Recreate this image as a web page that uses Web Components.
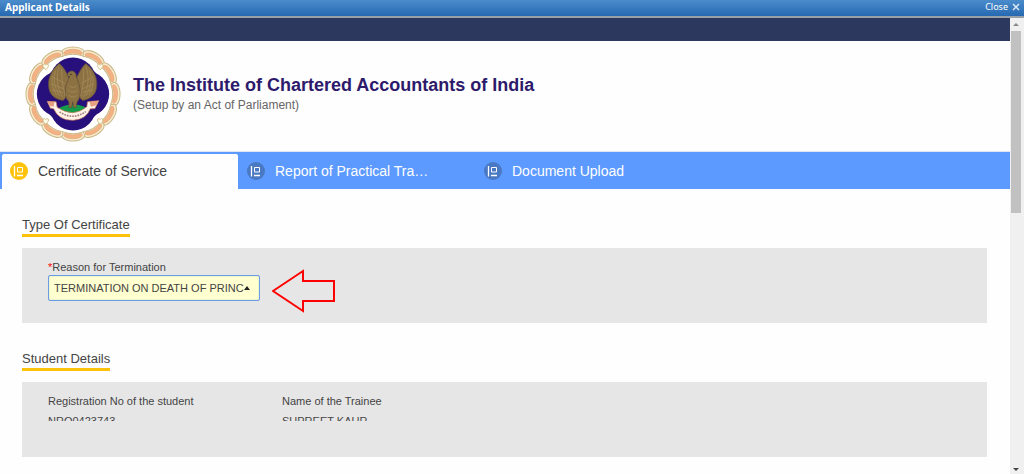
<!DOCTYPE html>
<html lang="en">
<head>
<meta charset="utf-8">
<meta name="viewport" content="width=device-width, initial-scale=1">
<title>Applicant Details</title>
<style>
  body{
    margin: 0;
    color: #444;
    background: #fefefe;
    font-family: "Liberation Sans", Arial, sans-serif;
    font-size: 11px;
  }
</style>
</head>
<body>
<app-dialog heading="Applicant Details">
  <site-header></site-header>
  <tab-bar>
    <tab-item selected>Certificate of Service</tab-item>
    <tab-item>Report of Practical Tra…</tab-item>
    <tab-item>Document Upload</tab-item>
  </tab-bar>
  <form-section heading="Type Of Certificate">
    <reason-field></reason-field>
    <pointer-arrow></pointer-arrow>
  </form-section>
  <form-section heading="Student Details">
    <read-field label="Registration No of the student">NRO0423743</read-field>
    <read-field label="Name of the Trainee">SUPREET KAUR</read-field>
  </form-section>
</app-dialog>

<script>
const define = (name, html) => customElements.define(name, class extends HTMLElement {
  constructor () {
    super()
    this.attachShadow({ mode: 'open' })
    this.shadowRoot.innerHTML = typeof html === 'function' ? html(this) : html
  }
})

/**
 * Dialog window: title bar, content and scroll rail
 */
define('app-dialog', el => `
<style>
  :host{
    display: flex;
    flex-direction: column;
    height: 100vh;
    overflow: hidden;
  }

  header{
    display: flex;
    justify-content: space-between;
    align-items: center;
    height: 16px;
    flex: none;
    padding: 0 4px 0 5px;
    border-bottom: 2px solid #98a0a8;
    background: linear-gradient(#4a8ccb, #2769b1);
    color: white;
    font-family: "Noto Sans", sans-serif;
  }

  h1{
    margin: 0;
    padding-bottom: 2px;
    font-size: 10px;
    line-height: 14px;
  }

  button{
    display: flex;
    align-items: center;
    gap: 4px;
    padding: 0 0 2px;
    border: none;
    background: none;
    color: inherit;
    font: 9px/14px "Noto Sans", sans-serif;
  }

  .body{
    display: flex;
    flex: 1;
    min-height: 0;
  }

  main{
    flex: 1;
    min-width: 0;
    overflow: hidden;
  }
</style>

<header>
  <h1>${el.getAttribute('heading')}</h1>
  <button>Close <svg width="8" height="8" viewBox="0 0 8 8" stroke="#dce9f6" stroke-width="1.5"><path d="M1 1l6 6M7 1l-6 6"/></svg></button>
</header>
<div class="body">
  <main><slot></slot></main>
  <scroll-rail></scroll-rail>
</div>
`)

define('scroll-rail', `
<style>
  :host{
    display: flex;
    flex-direction: column;
    align-items: center;
    flex: none;
    box-sizing: border-box;
    width: 14px;
    padding-right: 2px;
    background: #f0f0f0;
  }

  svg{
    display: block;
    flex: none;
  }

  i{
    width: 10px;
    height: 40%;
    margin-bottom: auto;
    background: #c1c1c1;
  }
</style>

<svg width="10" height="13" viewBox="0 0 10 13"><path d="M2 8l3-3 3 3z" fill="#888"/></svg>
<i></i>
<svg width="10" height="8" viewBox="0 0 10 8"><path d="M2 2h6l-3 3z" fill="#444"/></svg>
`)

/**
 * Institute emblem: petal ring, blue ground, eagle and ribbon
 */
const petals = Array.from({ length: 12 }, (_, i) => `<use href="#petal" transform="rotate(${i * 30})"/>`).join('')
const hearts = [45, 135, 225, 315].map(a => `<use href="#heart" transform="rotate(${a}) translate(0 -114) rotate(${-a})"/>`).join('')

define('institute-logo', `
<style>
  :host{
    display: block;
    flex: none;
  }

  svg{
    display: block;
  }
</style>

<svg width="96" height="96" viewBox="-142 -142 284 284" role="img" aria-label="Institute emblem">
  <defs>
    <g id="petal">
      <path d="M-35-122C-31-145 31-145 35-122L30-112Q0-123-30-112z" fill="#f8edd0" stroke="#c9b888" stroke-width="3"/>
      <path d="M-28-121C-23-136 23-136 28-121L24-116Q0-126-24-116z" fill="#f3b184" stroke="#e3a878" stroke-width="2"/>
    </g>
    <path id="heart" d="M0 9C-8 1-10-3-7-7Q-3-10 0-5Q3-10 7-7C10-3 8 1 0 9z" fill="#fffbea" stroke="#c9b77f" stroke-width="2.5"/>
  </defs>
  <circle r="116" fill="#fff"/>
  ${petals}
  ${hearts}
  <g fill="#28107c">
    <circle r="92"/>
    <circle cy="-40" r="68"/>
    <circle cy="40" r="68"/>
    <circle cx="-39" r="68"/>
    <circle cx="39" r="68"/>
  </g>
  <ellipse cy="51" rx="45" ry="20" fill="#159a49"/>
  <g fill="#8c7143" stroke="#625039" stroke-width="2">
    <path d="M-7-34C-16-59-26-79-41-90C-64-71-77-44-71-15C-67 5-50 17-29 19C-15 5-7-9-7-34z"/>
    <path d="M5-34C15-59 25-79 38-90C63-71 75-44 69-15C65 5 47 17 28 19C14 5 5-9 5-34z"/>
    <path d="M-18-55Q-13-69-2-68Q10-65 10-51L19-25Q26 8 12 24L9 40H2L-1 23L-4 40H-12L-12 23Q-28 9-21-25L-10-52z"/>
  </g>
  <g fill="none" stroke="#a98f5c" stroke-width="2">
    <path d="M-42-80C-49-55-50-20-30 10M-52-69Q-65-36-40 6M-61-53Q-66-25-49 3M-34-74Q-34-29-23 6M-65-30l38 15M-62-12l32 7M-57-49l32 18"/>
    <path d="M39-80C47-55 49-20 29 10M49-69Q62-36 38 6M58-53Q64-25 47 3M32-74Q33-29 23 6M62-30L26-15M59-12L28-5M55-49L24-31"/>
    <path d="M-13-25Q0-14 11-25M-14-11Q0 0 13-11M-12 4Q0 14 11 4"/>
  </g>
  <circle cx="-6" cy="-58" r="2" fill="#222"/>
  <path d="M-76 22L-50 23L-47 39Q0 72 41 38L43 23L76 20L65 43L51 44Q40 75 0 78Q-43 78-57 44L-67 42z" fill="#fff3e8" stroke="#cf7b5b" stroke-width="2"/>
  <path d="M-76 22L-55 23L-57 37L-67 36zM76 20L49 24L53 38L66 35z" fill="#e7a082"/>
  <path d="M-40 53Q0 79 38 52" fill="none" stroke="#a98080" stroke-width="5" stroke-dasharray="5 3"/>
</svg>
`)

define('site-header', `
<style>
  :host{
    display: block;
  }

  .strip{
    height: 23px;
    background: #2c385d;
  }

  .brand{
    display: flex;
    align-items: center;
    gap: 12px;
    box-sizing: border-box;
    height: 111px;
    padding: 0 25px 4px;
    border-bottom: 1px solid #dce6f5;
  }

  h2{
    margin: 0;
    color: #2d1a6b;
    font-size: 18px;
    line-height: 22px;
  }

  p{
    margin: 0;
    color: #666;
    font-size: 12px;
    line-height: 18px;
  }
</style>

<div class="strip"></div>
<div class="brand">
  <institute-logo></institute-logo>
  <div>
    <h2>The Institute of Chartered Accountants of India</h2>
    <p>(Setup by an Act of Parliament)</p>
  </div>
</div>
`)

define('tab-bar', `
<style>
  :host{
    display: flex;
    gap: 1px;
    padding: 2px 2px 0;
    background: #5c9aff;
  }
</style>

<slot></slot>
`)

define('tab-item', `
<style>
  :host{
    flex: 0 1 236px;
    min-width: 0;
    color: white;
    --badge: #4a78c2;
  }

  :host([selected]){
    border-radius: 2px 2px 0 0;
    background: #fefefe;
    color: #444;
    --badge: #ffc20a;
  }

  button{
    display: flex;
    align-items: center;
    gap: 10px;
    width: 100%;
    height: 35px;
    padding: 0 8px 2px;
    border: none;
    background: none;
    color: inherit;
    font: inherit;
    font-size: 14px;
    white-space: nowrap;
  }

  svg{
    flex: none;
  }
</style>

<button>
  <svg width="18" height="18" viewBox="0 0 18 18">
    <circle cx="9" cy="9" r="9" fill="var(--badge)"/>
    <path d="M4.500 4V14.500M7 13.500h6" stroke="#fff" stroke-width="1.300"/>
    <path d="M7.500 5.500h5V10h-5z" fill="none" stroke="#fff"/>
  </svg>
  <span><slot></slot></span>
</button>
`)

/**
 * Underlined heading with a grey panel below it
 */
define('form-section', el => `
<style>
  :host{
    display: block;
    padding: 26px 23px 0 22px;
  }

  h3{
    display: inline-block;
    margin: 0 0 11px;
    border-bottom: 3px solid #ffc20a;
    font-size: 13px;
    font-weight: normal;
    line-height: 19px;
    vertical-align: top;
  }

  .panel{
    display: flex;
    align-items: flex-start;
    gap: 12px;
    box-sizing: border-box;
    height: 75px;
    padding: 12px 26px;
    background: #e6e6e6;
  }
</style>

<h3>${el.getAttribute('heading')}</h3>
<div class="panel"><slot></slot></div>
`)

define('reason-field', `
<style>
  :host{
    display: block;
    width: 212px;
  }

  label{
    display: block;
    line-height: 15px;
  }

  b{
    color: red;
    font-weight: normal;
  }

  .box{
    display: grid;
    align-items: center;
  }

  select, svg{
    grid-area: 1 / 1;
  }

  select{
    appearance: none;
    width: 100%;
    height: 26px;
    padding: 0 12px 0 5px;
    border: 1px solid #6b9be0;
    border-radius: 2px;
    outline: none;
    box-shadow: inset 0 0 1px #6b9be0;
    background: #ffffd0;
    color: #444;
    font: inherit;
  }

  svg{
    justify-self: end;
    margin-right: 10px;
    pointer-events: none;
  }
</style>

<label for="reason"><b>*</b>Reason for Termination</label>
<div class="box">
  <select id="reason"><option>TERMINATION ON DEATH OF PRINC</option></select>
  <svg width="6" height="4" viewBox="0 0 6 4"><path d="M0 4l3-4 3 4z" fill="#222"/></svg>
</div>
`)

define('pointer-arrow', `
<style>
  :host{
    display: block;
    align-self: center;
    padding-top: 10px;
  }

  svg{
    display: block;
  }
</style>

<svg width="64" height="44" viewBox="0 0 64 44"><path d="M1 22L31 2V12H62V32H31V42z" fill="none" stroke="#f00" stroke-width="2"/></svg>
`)

define('read-field', el => `
<style>
  :host{
    display: block;
    width: 222px;
  }

  dl, dd{
    margin: 0;
  }

  dt{
    line-height: 15px;
  }

  dd{
    height: 6px;
    margin-top: 6px;
    overflow: hidden;
    line-height: 12px;
  }
</style>

<dl>
  <dt>${el.getAttribute('label')}</dt>
  <dd><slot></slot></dd>
</dl>
`)
</script>
</body>
</html>
